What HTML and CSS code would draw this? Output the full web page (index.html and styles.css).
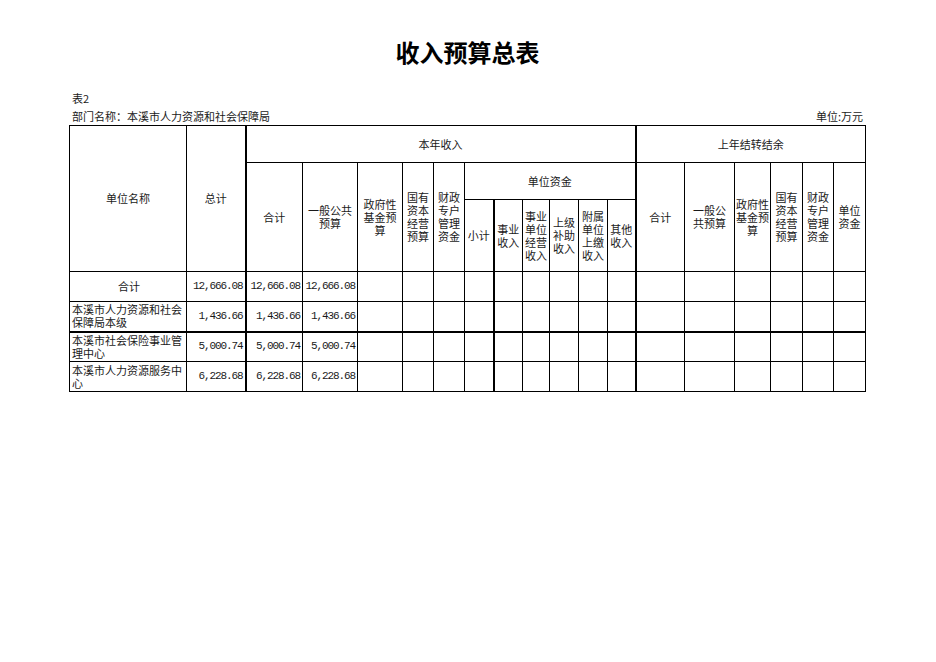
FILE: index.html
```html
<!DOCTYPE html>
<html lang="zh-CN">
<head>
<meta charset="utf-8">
<title>收入预算总表</title>
<link rel="stylesheet" href="styles.css">
</head>
<body>
<div class="page">
  <h1 class="title">收入预算总表</h1>
  <div class="meta">表2</div>
  <div class="meta meta-row"><span>部门名称：本溪市人力资源和社会保障局</span><span>单位:万元</span></div>
  <table class="grid">
    <colgroup>
      <col style="width:117px"><col style="width:59px"><col style="width:57px"><col style="width:55px"><col style="width:45px"><col style="width:31px"><col style="width:31px"><col style="width:29px"><col style="width:29px"><col style="width:27px"><col style="width:29px"><col style="width:29px"><col style="width:28px"><col style="width:49px"><col style="width:50px"><col style="width:36px"><col style="width:32px"><col style="width:31px"><col style="width:32px">
    </colgroup>
    <thead>
      <tr class="h1">
        <th rowspan="3">单位名称</th>
        <th rowspan="3">总计</th>
        <th colspan="11" class="tl">本年收入</th>
        <th colspan="6" class="tl">上年结转结余</th>
      </tr>
      <tr class="h2">
        <th rowspan="2" class="tl">合计</th>
        <th rowspan="2">一般公共<br>预算</th>
        <th rowspan="2">政府性<br>基金预<br>算</th>
        <th rowspan="2">国有<br>资本<br>经营<br>预算</th>
        <th rowspan="2">财政<br>专户<br>管理<br>资金</th>
        <th colspan="6">单位资金</th>
        <th rowspan="2" class="tl">合计</th>
        <th rowspan="2">一般公<br>共预算</th>
        <th rowspan="2">政府性<br>基金预<br>算</th>
        <th rowspan="2">国有<br>资本<br>经营<br>预算</th>
        <th rowspan="2">财政<br>专户<br>管理<br>资金</th>
        <th rowspan="2">单位<br>资金</th>
      </tr>
      <tr class="h3">
        <th>小计</th>
        <th class="tl">事业<br>收入</th>
        <th>事业<br>单位<br>经营<br>收入</th>
        <th>上级<br>补助<br>收入</th>
        <th>附属<br>单位<br>上缴<br>收入</th>
        <th>其他<br>收入</th>
      </tr>
    </thead>
    <tbody>
      <tr class="r1">
        <td class="name center">合计</td>
        <td class="num">12,666.08</td><td class="num tl">12,666.08</td><td class="num">12,666.08</td>
        <td></td><td></td><td></td><td></td><td class="tl"></td><td></td><td></td><td></td><td></td>
        <td class="tl"></td><td></td><td></td><td></td><td></td><td></td>
      </tr>
      <tr class="r2">
        <td class="name">本溪市人力资源和社会<br>保障局本级</td>
        <td class="num">1,436.66</td><td class="num tl">1,436.66</td><td class="num">1,436.66</td>
        <td></td><td></td><td></td><td></td><td class="tl"></td><td></td><td></td><td></td><td></td>
        <td class="tl"></td><td></td><td></td><td></td><td></td><td></td>
      </tr>
      <tr class="r3">
        <td class="name">本溪市社会保险事业管<br>理中心</td>
        <td class="num">5,000.74</td><td class="num tl">5,000.74</td><td class="num">5,000.74</td>
        <td></td><td></td><td></td><td></td><td class="tl"></td><td></td><td></td><td></td><td></td>
        <td class="tl"></td><td></td><td></td><td></td><td></td><td></td>
      </tr>
      <tr class="r4">
        <td class="name">本溪市人力资源服务中<br>心</td>
        <td class="num">6,228.68</td><td class="num tl">6,228.68</td><td class="num">6,228.68</td>
        <td></td><td></td><td></td><td></td><td class="tl"></td><td></td><td></td><td></td><td></td>
        <td class="tl"></td><td></td><td></td><td></td><td></td><td></td>
      </tr>
    </tbody>
  </table>
</div>
</body>
</html>
```

FILE: styles.css
```css
html, body {
  margin: 0;
  padding: 0;
  background: #ffffff;
}

body {
  font-family: "Noto Sans CJK SC", "Noto Sans", sans-serif;
  color: #1a1a1a;
}

.page {
  width: 797px;
  margin-left: 69px;
  padding-top: 38px;
}

.title {
  margin: 0;
  height: 28px;
  font-size: 24px;
  line-height: 28px;
  font-weight: 700;
  text-align: center;
  color: #000;
}

.meta {
  font-size: 11px;
  line-height: 14px;
  padding-left: 3px;
  padding-right: 3px;
}

.meta:first-of-type {
  margin-top: 25px;
}

.meta-row {
  margin-top: 4px;
  display: flex;
  justify-content: space-between;
}

.grid {
  margin-top: 2px;
  border-collapse: collapse;
  table-layout: fixed;
  width: 797px;
  font-size: 11px;
  line-height: 13px;
}

.grid th,
.grid td {
  border: 1px solid #000;
  padding: 0;
  font-weight: 400;
  text-align: center;
  vertical-align: middle;
  overflow: hidden;
}

.grid .tl {
  border-left: 2px solid #000;
}

.h1 { height: 37px; }
.h2 { height: 37px; }
.h3 { height: 72px; }

.grid tbody tr { height: 30px; }
.grid tbody .r3 td { border-top: 2px solid #000; }

.grid .name {
  text-align: left;
  padding-left: 2px;
  line-height: 13px;
  white-space: nowrap;
}

.grid .name.center {
  text-align: center;
}

.grid .num {
  text-align: right;
  padding-right: 2px;
  font-family: "Liberation Mono", monospace;
  letter-spacing: -1.1px;
  white-space: nowrap;
}
```
